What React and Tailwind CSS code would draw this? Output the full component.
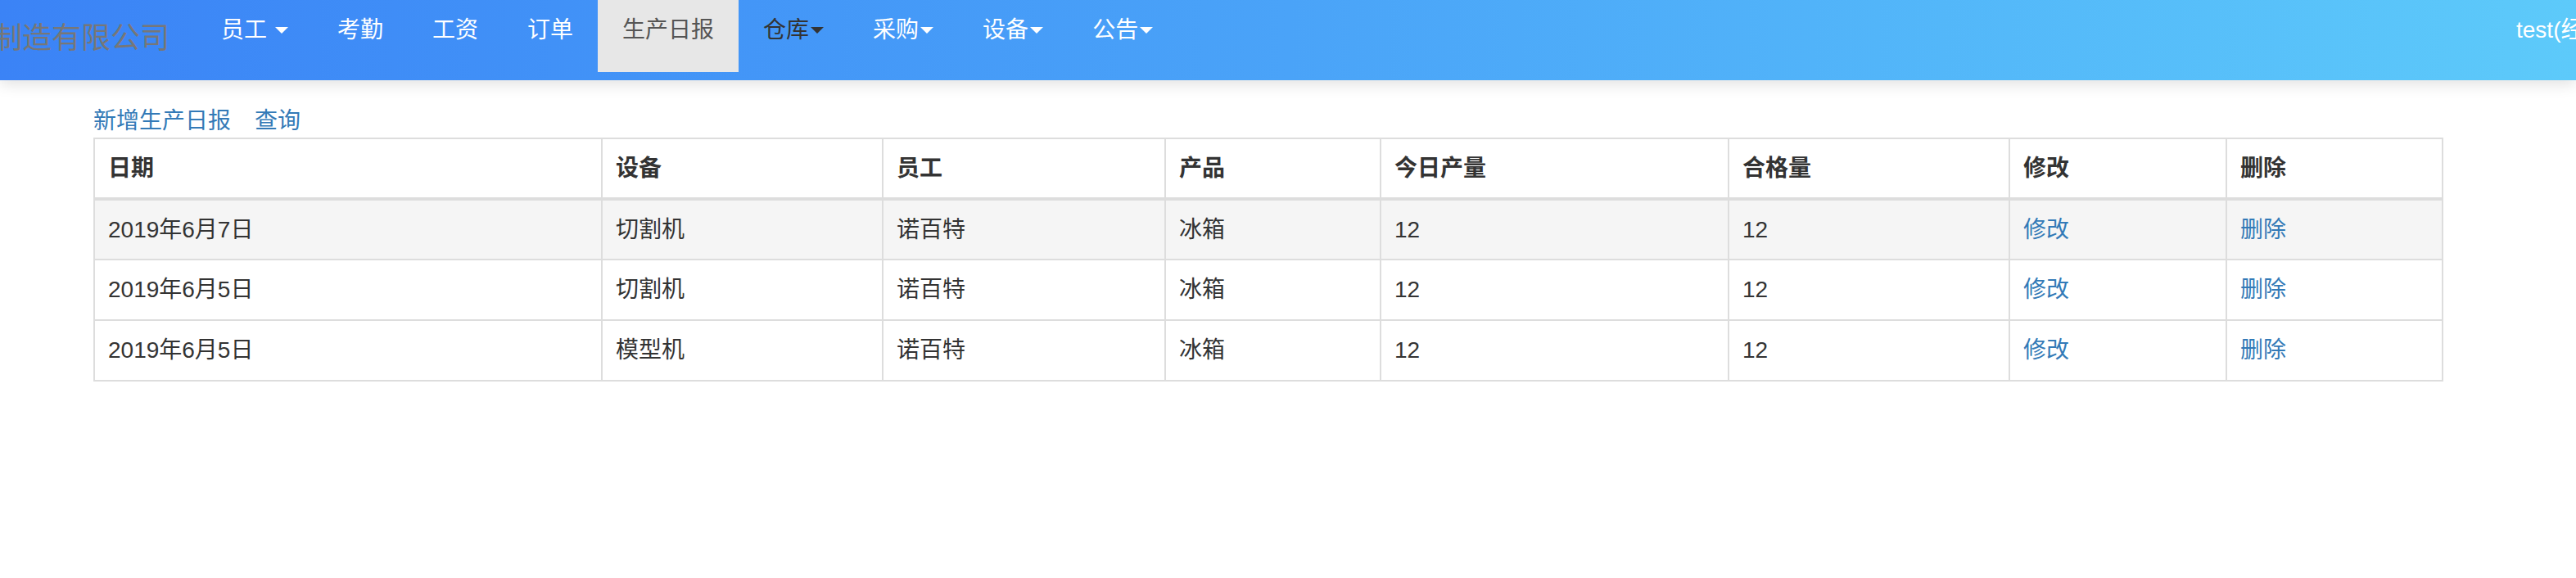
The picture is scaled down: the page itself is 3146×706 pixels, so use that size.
import React from 'react';

const font = { fontFamily: '"Liberation Sans", "Noto Sans CJK SC", sans-serif' };

function Caret({ dark }) {
  return (
    <span
      className={`inline-block w-0 h-0 border-l-[8px] border-r-[8px] border-t-[8px] border-l-transparent border-r-transparent ${dark ? 'border-t-[#333]' : 'border-t-white'}`}
    />
  );
}

const navItems = [
  { label: '员工', caret: true, space: true },
  { label: '考勤' },
  { label: '工资' },
  { label: '订单' },
  { label: '生产日报', active: true },
  { label: '仓库', caret: true, dark: true },
  { label: '采购', caret: true },
  { label: '设备', caret: true },
  { label: '公告', caret: true },
];

const rows = [
  { date: '2019年6月7日', device: '切割机', hover: true },
  { date: '2019年6月5日', device: '切割机' },
  { date: '2019年6月5日', device: '模型机' },
];

const cols = [
  { title: '日期', w: 'w-[620px]' },
  { title: '设备', w: 'w-[343px]' },
  { title: '员工', w: 'w-[345px]' },
  { title: '产品', w: 'w-[263px]' },
  { title: '今日产量', w: 'w-[425px]' },
  { title: '合格量', w: 'w-[343px]' },
  { title: '修改', w: 'w-[265px]' },
  { title: '删除', w: 'w-[264px]' },
];

export default function App() {
  return (
    <div className="w-[3146px] h-[706px] bg-white overflow-hidden" style={font}>
      {/* Navbar */}
      <div className="relative z-10 h-[98px] flex items-start bg-gradient-to-r from-[#3b83f6] via-[#4aa3f8] to-[#5dcafa] shadow-[0_4px_18px_rgba(0,0,0,0.13)]">
        <div className="w-[240px] h-[94px] shrink-0 overflow-hidden flex items-center">
          <span className="ml-[-9px] whitespace-nowrap text-[36px] text-[#777]">制造有限公司</span>
        </div>
        {navItems.map((item) => (
          <div
            key={item.label}
            className={`h-[88px] px-[30px] pt-[17px] shrink-0 flex items-start text-[28px] leading-[40px] whitespace-nowrap ${
              item.active ? 'bg-[#e7e7e7] text-[#555]' : item.dark ? 'text-[#333]' : 'text-white'
            }`}
          >
            <span>{item.label}</span>
            {item.caret && (
              <span className={`flex items-center h-[40px] ${item.space ? 'ml-[10px]' : 'ml-[2px]'}`}>
                <Caret dark={item.dark} />
              </span>
            )}
          </div>
        ))}
        <div className="flex-1" />
        <div className="w-[73px] shrink-0 overflow-hidden whitespace-nowrap pt-[17px] text-[28px] leading-[40px] text-white">
          test(经理)
        </div>
      </div>

      {/* Content */}
      <div className="ml-[114px] w-[2868px] pt-[30px]">
        <div className="flex gap-[29px] text-[28px] leading-[40px] text-[#337ab7]">
          <span>新增生产日报</span>
          <span>查询</span>
        </div>
        <table className="w-[2868px] table-fixed border-collapse border-2 border-[#ddd] text-[28px] leading-[40px] text-[#333]">
          <thead>
            <tr>
              {cols.map((c) => (
                <th
                  key={c.title}
                  className={`${c.w} h-[74px] px-[16px] text-left font-bold align-middle border-2 border-[#ddd] border-b-4`}
                >
                  {c.title}
                </th>
              ))}
            </tr>
          </thead>
          <tbody>
            {rows.map((r, i) => (
              <tr key={i} className={r.hover ? 'bg-[#f5f5f5]' : 'bg-white'}>
                <td className="h-[74px] px-[16px] border-2 border-[#ddd] align-middle">{r.date}</td>
                <td className="px-[16px] border-2 border-[#ddd] align-middle">{r.device}</td>
                <td className="px-[16px] border-2 border-[#ddd] align-middle">诺百特</td>
                <td className="px-[16px] border-2 border-[#ddd] align-middle">冰箱</td>
                <td className="px-[16px] border-2 border-[#ddd] align-middle">12</td>
                <td className="px-[16px] border-2 border-[#ddd] align-middle">12</td>
                <td className="px-[16px] border-2 border-[#ddd] align-middle text-[#337ab7]">修改</td>
                <td className="px-[16px] border-2 border-[#ddd] align-middle text-[#337ab7]">删除</td>
              </tr>
            ))}
          </tbody>
        </table>
      </div>
    </div>
  );
}
